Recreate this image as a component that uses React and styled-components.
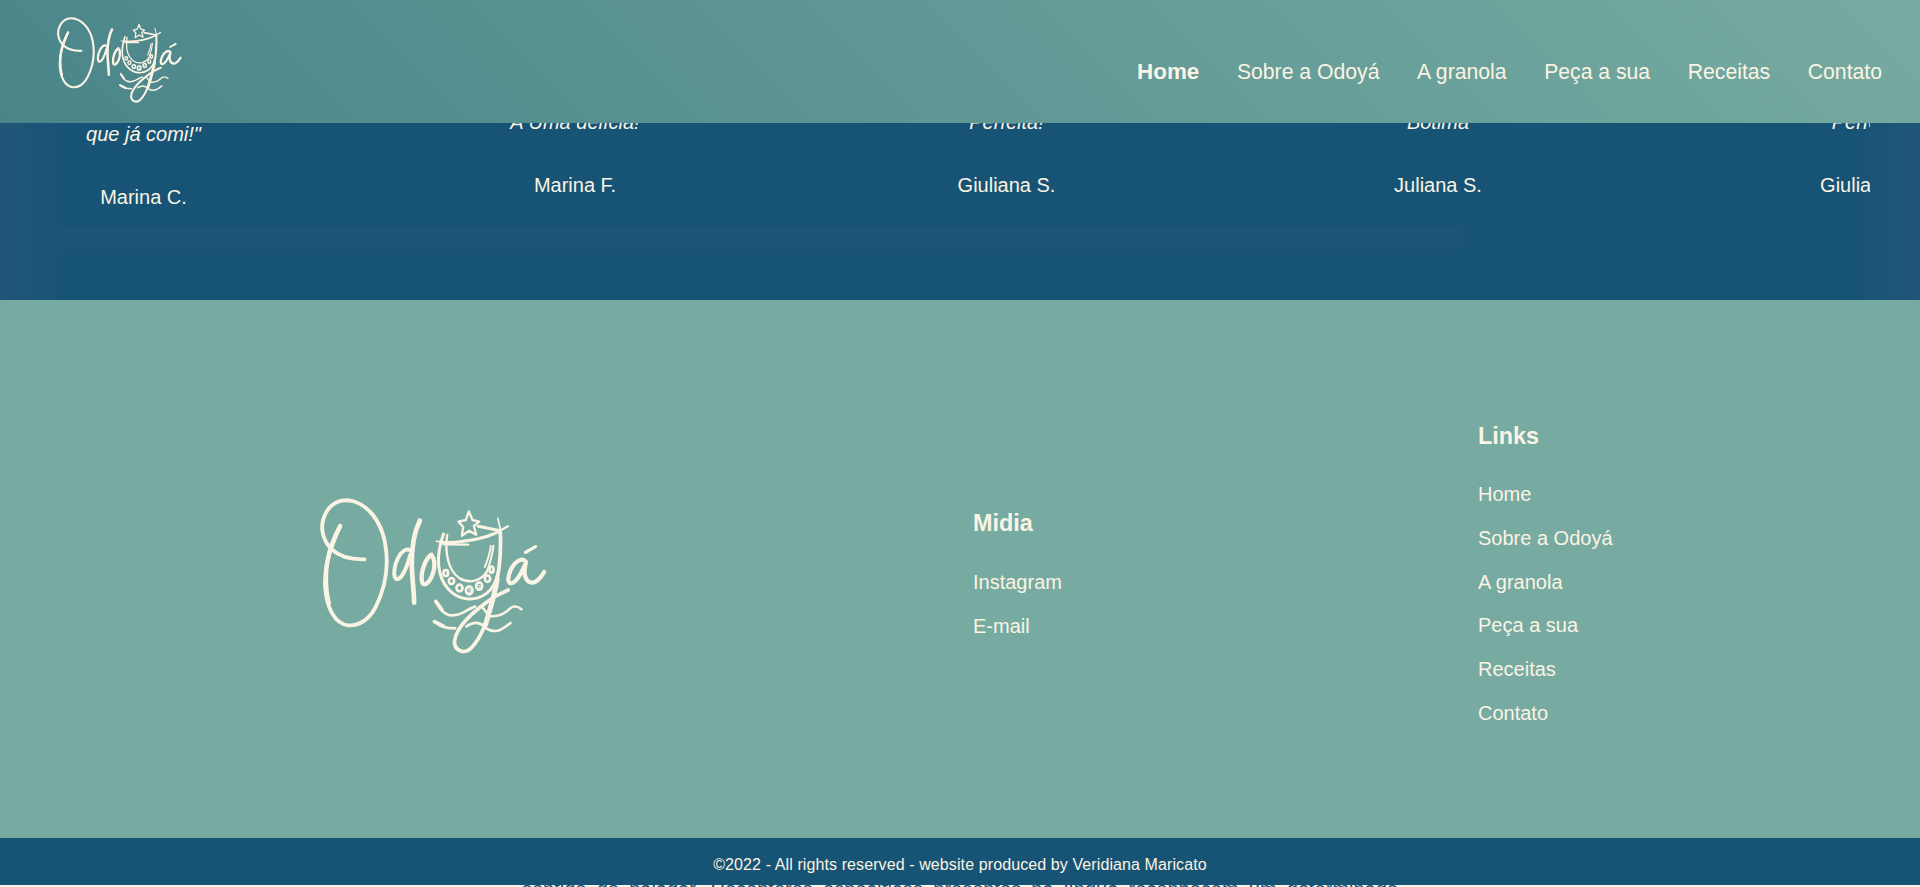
import React from "react";
import styled, { createGlobalStyle } from "styled-components";

const GlobalStyle = createGlobalStyle`
  * { box-sizing: border-box; }
  html, body { margin: 0; padding: 0; overflow: hidden; }
  body {
    background: #fbf4e4;
    color: #fbf4e4;
    font-family: "Liberation Sans", Arial, sans-serif;
    font-size: 20px;
  }
  p, h2, ul { margin: 0; padding: 0; font-weight: inherit; }
  ul { list-style: none; }
`;

const Page = styled.div`
  display: flex;
  flex-direction: column;
  height: 887px;
  overflow: hidden;
`;

const Header = styled.header`
  flex: none;
  display: flex;
  justify-content: space-between;
  height: 123px;
  padding: 16.5px 38px 0 56.5px;
  background: linear-gradient(45deg, #4a858a, #77aba1);
`;

const LogoDrawing = styled.svg`
  display: block;
  flex: none;
  width: ${(p) => p.$width}px;
  height: ${(p) => p.$height}px;
  fill: none;
  stroke: #fbf4e4;
  stroke-linecap: round;
  stroke-linejoin: round;
`;

const Nav = styled.nav`
  display: flex;
  gap: 37.6px;
  align-items: center;
  height: 24px;
  margin-top: 43.5px;
`;

const NavLink = styled.a`
  font-size: ${(p) => (p.$active ? "22.4px" : "21.2px")};
  font-weight: ${(p) => (p.$active ? 700 : 400)};
  line-height: 24px;
  white-space: nowrap;
`;

const Testimonials = styled.section`
  flex: none;
  height: 177px;
  padding: 0 50px;
  background: linear-gradient(to right, #205678 0, #175375 70px, #175375 1850px, #205678 100%);
`;

const Track = styled.div`
  display: flex;
  height: 105px;
  overflow: hidden;
`;

const Card = styled.article`
  flex: none;
  width: ${(p) => p.$width}px;
  text-align: center;
`;

const Quote = styled.p`
  font-style: italic;
  line-height: 24px;
  margin-top: ${(p) => p.$top}px;
`;

const Author = styled.p`
  line-height: 24px;
  margin-top: 39px;
`;

const ScrollThumb = styled.div`
  width: 1413px;
  height: 22px;
  background: #1b5477;
`;

const Footer = styled.footer`
  flex: none;
  display: flex;
  height: 538px;
  background: #77aba1;
`;

const FooterLogo = styled.div`
  width: 973px;
  padding: 198px 0 0 320px;
`;

const FooterColumn = styled.div`
  width: ${(p) => p.$width}px;
  padding-top: ${(p) => p.$top}px;
`;

const FooterTitle = styled.h2`
  font-size: 23.4px;
  font-weight: 700;
  line-height: 26px;
  margin-bottom: ${(p) => p.$gap}px;
`;

const FooterItem = styled.li`
  height: 43.8px;
  padding-top: 10px;
  line-height: 23px;
`;

const Copyright = styled.div`
  flex: none;
  height: 47px;
  padding-top: 17px;
  background: #175375;
  font-size: 16px;
  letter-spacing: 0.1px;
  line-height: 19px;
  text-align: center;
`;

const Article = styled.div`
  height: 2px;
  overflow: hidden;
  padding: 0 522px;
`;

const Paragraph = styled.p`
  margin-top: -8px;
  color: #175375;
  line-height: 24px;
  text-align: justify;
  text-align-last: justify;
  white-space: nowrap;
`;

const beads = [
  [438, 280, 7, 9], [455, 304, 8, 9], [479, 325, 9, 10], [508, 332, 10, 12],
  [538, 319, 9, 11], [563, 297, 8, 10], [575, 270, 6, 9],
];

function Logo({ width, height }) {
  return (
    <LogoDrawing $width={width} $height={height} viewBox="61 55 680 468" role="img" aria-label="Odoyá">
      <path strokeWidth="11.5" d="M194 239C153 240 120 232 97 210C67 183 58 137 77 102C95 67 126 57 158 64C207 77 243 126 255 186C268 253 257 324 227 383C207 421 176 440 145 437C105 433 80 383 76 323C73 269 84 222 121 139" />
      <path strokeWidth="13" d="M121 139C103 173 90 205 85 235C76 270 76 330 87 370" />
      <path strokeWidth="12" d="M330 211C318 206 304 216 294 236C282 260 280 288 288 297C302 306 320 269 332 224" />
      <path strokeWidth="14" d="M360 123C341 161 335 211 336 258C337 299 342 331 343 369" />
      <path strokeWidth="13" d="M395 225C378 235 362 275 366 303C369 322 384 315 396 290C409 259 404 224 390 229" />
      <path strokeWidth="7" d="M507 95L518 121L538 126L522 139L529 165L508 153L486 168L490 142L476 126L498 121Z" />
      <path strokeWidth="9" d="M425 189C480 190 555 179 602 153L535 140" />
      <path strokeWidth="5" d="M410 185L451 188M594 116L602 150" />
      <path strokeWidth="7" d="M432 194L505 195M600 153L624 140M442 166C434 225 447 272 477 294C508 315 545 303 561 276" />
      <path strokeWidth="9" d="M431 163C406 231 413 292 445 328C479 366 528 365 559 342C581 326 589 307 594 280" />
      <path strokeWidth="6" d="M581 198C577 231 570 253 560 279M573 199C570 225 562 244 555 262" />
      <path strokeWidth="11" d="M601 153C605 219 598 283 583 341C565 411 550 470 514 505C494 525 463 514 464 485C469 436 530 388 586 350L625 331" />
      <path strokeWidth="15" d="M592 300C584 350 570 390 557 435" />
      <g strokeWidth="8">
        {beads.map(([cx, cy, rx, ry]) => (
          <ellipse key={cx} cx={cx} cy={cy} rx={rx} ry={ry} />
        ))}
      </g>
      <path strokeWidth="3" d="M505 327L512 331L507 340M535 317L542 320L537 325" />
      <path strokeWidth="11" d="M408 365L426 390M404 426L432 440" />
      <path strokeWidth="8" d="M408 365C427 408 455 416 490 399C505 390 514 384 526 381M404 426C428 446 447 446 466 446M500 440C529 421 545 431 559 446C586 463 606 451 632 430" />
      <path strokeWidth="7.5" d="M547 382L568 409C595 413 615 402 631 386C644 376 654 380 665 389" />
      <path strokeWidth="12.5" d="M678 246C665 231 644 247 633 270C621 298 623 317 640 309C659 299 667 272 678 251C670 282 675 307 697 309C713 309 723 292 733 277" />
      <path strokeWidth="10" d="M677 218L707 201" />
    </LogoDrawing>
  );
}

const navLinks = ["Home", "Sobre a Odoyá", "A granola", "Peça a sua", "Receitas", "Contato"];

const testimonials = [
  { quote: 'que já comi!"', author: "Marina C.", width: 187, top: -1 },
  { quote: "A Uma delícia!", author: "Marina F.", width: 676, top: -13 },
  { quote: "Perfeita!", author: "Giuliana S.", width: 187, top: -13 },
  { quote: "Botima", author: "Juliana S.", width: 676, top: -13 },
  { quote: "Perfeita!", author: "Giuliana S.", width: 186, top: -13 },
];

export default function App() {
  return (
    <Page>
      <GlobalStyle />
      <Header>
        <Logo width={125} height={86} />
        <Nav>
          {navLinks.map((label) => (
            <NavLink key={label} $active={label === "Home"}>{label}</NavLink>
          ))}
        </Nav>
      </Header>
      <Testimonials>
        <Track>
          {testimonials.map((t, i) => (
            <Card key={i} $width={t.width}>
              <Quote $top={t.top}>{t.quote}</Quote>
              <Author>{t.author}</Author>
            </Card>
          ))}
        </Track>
        <ScrollThumb />
      </Testimonials>
      <Footer>
        <FooterLogo>
          <Logo width={227} height={156} />
        </FooterLogo>
        <FooterColumn $width={505} $top={210}>
          <FooterTitle $gap={25}>Midia</FooterTitle>
          <ul>
            {["Instagram", "E-mail"].map((label) => <FooterItem key={label}>{label}</FooterItem>)}
          </ul>
        </FooterColumn>
        <FooterColumn $width={442} $top={123}>
          <FooterTitle $gap={24}>Links</FooterTitle>
          <ul>
            {navLinks.map((label) => <FooterItem key={label}>{label}</FooterItem>)}
          </ul>
        </FooterColumn>
      </Footer>
      <Copyright>©2022 - All rights reserved - website produced by Veridiana Maricato</Copyright>
      <Article>
        <Paragraph>sentido do paladar. Receptores específicos presentes na língua reconhecem um determinado</Paragraph>
      </Article>
    </Page>
  );
}
